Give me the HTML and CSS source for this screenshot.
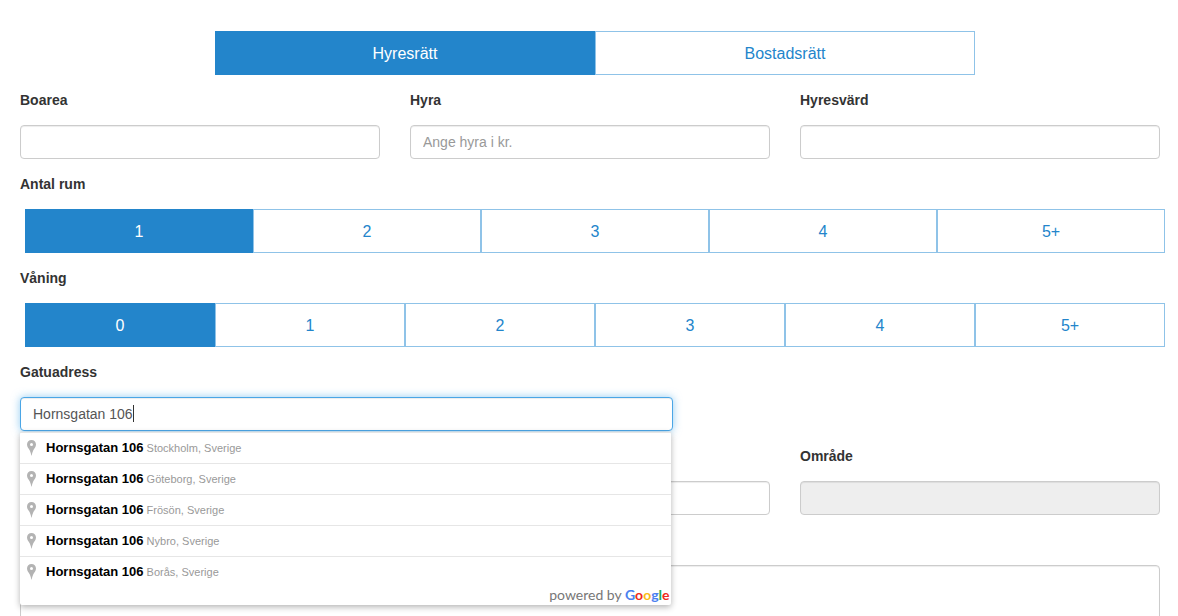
FILE: index.html
```html
<!DOCTYPE html>
<html lang="sv">

<head>
    <meta charset="UTF-8">
    <meta name="viewport" content="width=device-width, initial-scale=1.0">
    <title>Bostad</title>
    <link rel="stylesheet" href="styles.css">
</head>

<body>
    <svg class="sprite" aria-hidden="true">
        <symbol id="pin" viewBox="0 0 9 16">
            <path fill="#b3b3b3" fill-rule="evenodd" d="M4.500 0C1.900 0 0 2 0 4.500c0 2.600 1.800 4 2.800 6C3.500 12 4 13.800 4.500 16 5 13.800 5.500 12 6.200 10.500 7.200 8.500 9 7.100 9 4.500 9 2 7.100 0 4.500 0zM4.500 3a1.500 1.500 0 1 1 0 3a1.500 1.500 0 0 1 0-3z"/>
        </symbol>
    </svg>
    <form class="container">
        <div class="tabs">
            <div class="btn-group">
                <button type="button" class="btn active">Hyresrätt</button>
                <button type="button" class="btn">Bostadsrätt</button>
            </div>
        </div>

        <div class="row">
            <div class="field">
                <label for="boarea">Boarea</label>
                <input type="text" id="boarea" class="form-control">
            </div>
            <div class="field">
                <label for="hyra">Hyra</label>
                <input type="text" id="hyra" class="form-control" placeholder="Ange hyra i kr.">
            </div>
            <div class="field">
                <label for="hyresvard">Hyresvärd</label>
                <input type="text" id="hyresvard" class="form-control">
            </div>
        </div>

        <div class="group-title" id="rum">Antal rum</div>
        <div class="btn-group" role="group" aria-labelledby="rum">
            <button type="button" class="btn active">1</button>
            <button type="button" class="btn">2</button>
            <button type="button" class="btn">3</button>
            <button type="button" class="btn">4</button>
            <button type="button" class="btn">5+</button>
        </div>

        <div class="group-title" id="vaning">Våning</div>
        <div class="btn-group" role="group" aria-labelledby="vaning">
            <button type="button" class="btn active">0</button>
            <button type="button" class="btn">1</button>
            <button type="button" class="btn">2</button>
            <button type="button" class="btn">3</button>
            <button type="button" class="btn">4</button>
            <button type="button" class="btn">5+</button>
        </div>

        <div class="row">
            <div class="field wide">
                <label for="adress">Gatuadress</label>
                <div class="autocomplete">
                    <input type="text" id="adress" class="form-control focused" value="Hornsgatan 106" autocomplete="off">
                    <div class="suggestions">
                        <ul>
                            <li><svg class="pin"><use href="#pin"/></svg><b>Hornsgatan 106</b> <span>Stockholm, Sverige</span></li>
                            <li><svg class="pin"><use href="#pin"/></svg><b>Hornsgatan 106</b> <span>Göteborg, Sverige</span></li>
                            <li><svg class="pin"><use href="#pin"/></svg><b>Hornsgatan 106</b> <span>Frösön, Sverige</span></li>
                            <li><svg class="pin"><use href="#pin"/></svg><b>Hornsgatan 106</b> <span>Nybro, Sverige</span></li>
                            <li><svg class="pin"><use href="#pin"/></svg><b>Hornsgatan 106</b> <span>Borås, Sverige</span></li>
                        </ul>
                        <div class="powered">powered by <span class="google"><i class="g-blue">G</i><i class="g-red">o</i><i class="g-yellow">o</i><i class="g-blue">g</i><i class="g-green">l</i><i class="g-red">e</i></span></div>
                    </div>
                </div>
            </div>
        </div>

        <div class="row">
            <div class="field">
                <input type="text" class="form-control" aria-label="Postnummer">
            </div>
            <div class="field">
                <input type="text" class="form-control" aria-label="Ort">
            </div>
            <div class="field">
                <label for="omrade">Område</label>
                <input type="text" id="omrade" class="form-control" disabled>
            </div>
        </div>

        <div class="row description">
            <textarea class="form-control" rows="4" aria-label="Beskrivning"></textarea>
        </div>
    </form>
</body>

</html>
```

FILE: styles.css
```css
* {
    box-sizing: border-box;
}

body {
    margin: 0;
    font-family: "Liberation Sans", Arial, sans-serif;
    font-size: 14px;
    line-height: 20px;
    color: #333;
    background-color: #fff;
}

.sprite {
    display: none;
}

.container {
    padding: 31px 13px 0 20px;
}

/* button groups */
.btn-group {
    display: flex;
    margin-left: 5px;
}

.tabs {
    padding-left: 5px;
}

.tabs .btn-group {
    width: calc(100% * 2 / 3);
    margin: 0 auto;
}

.btn {
    flex: 1;
    height: 44px;
    padding: 2px 0 0;
    border: 1px solid #8fc3e8;
    background-color: #fff;
    color: #2385cb;
    font-family: inherit;
    font-size: 16px;
    cursor: pointer;
}

.btn.active {
    border-color: #2385cb;
    background-color: #2385cb;
    color: #fff;
}

/* fields */
.row {
    display: grid;
    grid-template-columns: repeat(12, 1fr);
    column-gap: 30px;
    align-items: end;
    margin-right: 5px;
}

.field {
    grid-column: span 4;
}

.field.wide {
    grid-column: span 7;
}

label,
.group-title {
    display: block;
    margin: 15px 0;
    font-weight: bold;
}

.form-control {
    display: block;
    width: 100%;
    height: 34px;
    padding: 6px 12px;
    border: 1px solid #ccc;
    border-radius: 4px;
    background-color: #fff;
    box-shadow: inset 0 1px 1px rgba(0, 0, 0, 0.075);
    color: #555;
    font-family: inherit;
    font-size: 14px;
    line-height: 20px;
    outline: none;
}

.form-control::placeholder {
    color: #999;
}

.form-control:disabled {
    background-color: #eee;
}

.form-control.focused {
    border-color: #4ba6e6;
    box-shadow: inset 0 1px 1px rgba(0, 0, 0, 0.075), 0 0 8px rgba(75, 170, 233, 0.6);
    caret-color: transparent;
}

.description {
    margin-top: 50px;
}

.description .form-control {
    grid-column: 1 / -1;
    height: 100px;
}

/* address suggestions */
.autocomplete {
    position: relative;
}

/* text cursor */
.autocomplete::before {
    content: '';
    position: absolute;
    top: 8px;
    left: 113px;
    width: 1px;
    height: 17px;
    background-color: #333;
}

.suggestions {
    position: absolute;
    top: calc(100% + 1px);
    left: 0;
    right: 2px;
    z-index: 10;
    border-radius: 2px;
    background-color: #fff;
    box-shadow: 0 2px 6px rgba(0, 0, 0, 0.3);
}

.suggestions ul {
    margin: 0;
    padding: 0;
    list-style: none;
}

.suggestions li {
    height: 31px;
    padding: 0 7px;
    border-top: 1px solid #e6e6e6;
    color: #999;
    font-size: 11px;
    line-height: 30px;
    cursor: default;
}

.suggestions b {
    color: #000;
    font-size: 13px;
}

.pin {
    width: 9px;
    height: 16px;
    margin: 0 10px 2px 0;
    vertical-align: middle;
}

.powered {
    height: 18px;
    padding-right: 1px;
    color: #777;
    font-family: Lato, sans-serif;
    font-size: 14px;
    line-height: 16px;
    text-align: right;
}

.google {
    font-weight: bold;
}

.google i {
    font-style: normal;
}

.g-blue {
    color: #4a80f0;
}

.g-red {
    color: #ee2a20;
}

.g-yellow {
    color: #fbbc14;
}

.g-green {
    color: #22a95a;
}
```
